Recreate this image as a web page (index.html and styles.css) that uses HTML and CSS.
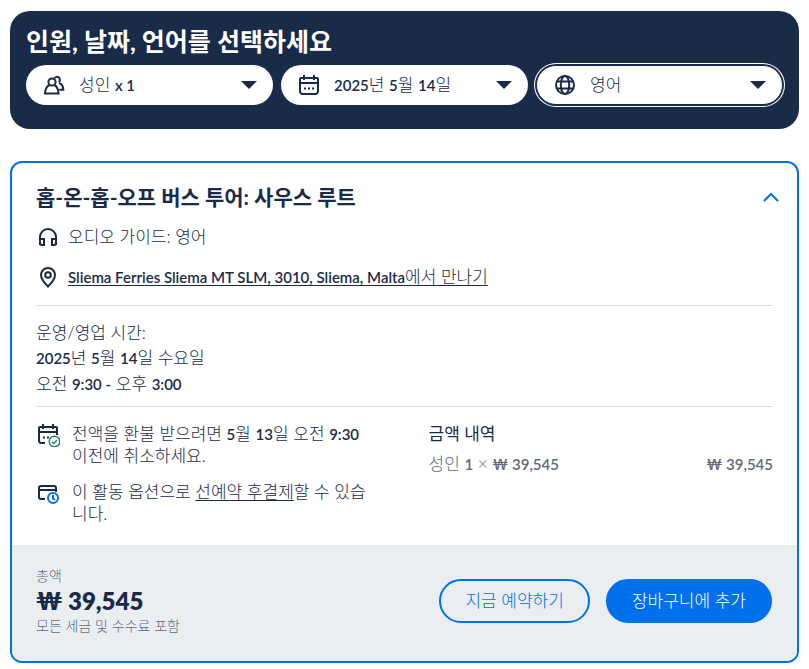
FILE: index.html
```html
<!DOCTYPE html>
<html lang="ko">
<head>
  <meta charset="UTF-8">
  <meta name="viewport" content="width=device-width, initial-scale=1">
  <title>인원, 날짜, 언어를 선택하세요</title>
  <link rel="stylesheet" href="styles.css">
</head>
<body>
  <section class="picker">
    <h2 class="picker-title">인원, 날짜, 언어를 선택하세요</h2>
    <div class="picker-fields">
      <button type="button" class="field" aria-haspopup="dialog">
        <svg class="icon" viewBox="0 0 24 24" aria-hidden="true">
          <circle cx="10" cy="9" r="3.6"/>
          <path d="M7.6 12C4.800 13.200 3.200 16 3 20.500h13.500c-.2-4.500-1.700-7.300-4.300-8.500"/>
          <path d="M12.300 5.400a3 3 0 1 1 4.600 3.700M17 10c2.700.9 4.200 3.300 4.300 6.700h-4"/>
        </svg>
        <span class="field-text">성인 <span class="latin">x 1</span></span>
        <span class="caret"></span>
      </button>
      <button type="button" class="field" aria-haspopup="dialog">
        <svg class="icon" viewBox="0 0 24 24" aria-hidden="true">
          <path d="M4 5h16a1 1 0 0 1 1 1v12.500a2.500 2.500 0 0 1-2.500 2.500h-13A2.500 2.500 0 0 1 3 18.500V6a1 1 0 0 1 1-1zM3 10h18M7 2v5M17 2v5"/>
          <path class="dots" d="M7 15.500h2M11 15.500h2M15 15.500h2"/>
        </svg>
        <span class="field-text"><span class="latin">2025</span>년 <span class="latin">5</span>월 <span class="latin">14</span>일</span>
        <span class="caret"></span>
      </button>
      <div class="field field-active">
        <svg class="icon" viewBox="0 0 24 24" aria-hidden="true">
          <circle cx="12" cy="12" r="9"/>
          <ellipse cx="12" cy="12" rx="4.200" ry="9"/>
          <path d="M4 8.500h16M4 15.500h16"/>
        </svg>
        <select class="field-text field-select" aria-label="언어">
          <option>영어</option>
        </select>
        <span class="caret"></span>
      </div>
    </div>
  </section>

  <section class="option">
    <div class="option-body">
      <div class="option-head">
        <h3 class="option-title">홉-온-홉-오프 버스 투어: 사우스 루트</h3>
        <button type="button" class="toggle" aria-label="접기">
          <svg class="icon" viewBox="0 0 24 24" aria-hidden="true"><path d="M5 16l7-7 7 7"/></svg>
        </button>
      </div>
      <div class="info">
        <svg class="icon" viewBox="0 0 24 24" aria-hidden="true">
          <path d="M4 20v-8a8 8 0 0 1 16 0v8"/>
          <path d="M4 14h4v6H6a2 2 0 0 1-2-2zM20 14h-4v6h2a2 2 0 0 0 2-2z"/>
        </svg>
        <span>오디오 가이드: 영어</span>
      </div>
      <div class="info">
        <svg class="icon" viewBox="0 0 24 24" aria-hidden="true">
          <path d="M12 21.500c-4-4-7-7.500-7-11.500a7 7 0 0 1 14 0c0 4-3 7.500-7 11.500z"/>
          <circle cx="12" cy="10" r="2.800"/>
        </svg>
        <a href="#"><span class="latin">Sliema Ferries Sliema MT SLM, 3010, Sliema, Malta</span>에서 만나기</a>
      </div>

      <div class="hours">
        <p>운영/영업 시간:</p>
        <p><span class="latin">2025</span>년 <span class="latin">5</span>월 <span class="latin">14</span>일 수요일</p>
        <p>오전 <span class="latin">9:30 -</span> 오후 <span class="latin">3:00</span></p>
      </div>

      <div class="details">
        <ul class="policies">
          <li>
            <svg class="icon" viewBox="0 0 24 24" aria-hidden="true">
              <path d="M9 20H5.500A2.500 2.500 0 0 1 3 17.500V5a1 1 0 0 1 1-1h16a1 1 0 0 1 1 1v7M3 9h18M7 1v5M17 1v5"/>
              <path class="dots" d="M7 14.500h2M11 14.500h2"/>
              <circle class="green" cx="18.500" cy="18.500" r="5.300"/>
              <path class="green" d="M16 18.700l1.800 1.800 3.200-3.600"/>
            </svg>
            <p>전액을 환불 받으려면 <span class="latin">5</span>월 <span class="latin">13</span>일 오전 <span class="latin">9:30</span> 이전에 취소하세요.</p>
          </li>
          <li>
            <svg class="icon" viewBox="0 0 24 24" aria-hidden="true">
              <path d="M9 18H5a2 2 0 0 1-2-2V7a2 2 0 0 1 2-2h13a2 2 0 0 1 2 2v4M3 9h17"/>
              <circle class="blue" cx="17" cy="17" r="5"/>
              <path class="blue" d="M17 14v3.500l2 1.500"/>
            </svg>
            <p class="break-any">이 활동 옵션으로 <a href="#">선예약 후결제</a>할 수 있습니다.</p>
          </li>
        </ul>
        <div class="price">
          <h4>금액 내역</h4>
          <div class="price-row">
            <span>성인 <span class="latin">1</span> × <span class="latin">₩ 39,545</span></span>
            <span class="latin">₩ 39,545</span>
          </div>
        </div>
      </div>
    </div>

    <div class="option-footer">
      <div class="total">
        <span class="total-label">총액</span>
        <strong class="total-price">₩ 39,545</strong>
        <span class="total-note">모든 세금 및 수수료 포함</span>
      </div>
      <div class="actions">
        <button type="button" class="btn btn-outline">지금 예약하기</button>
        <button type="button" class="btn btn-primary">장바구니에 추가</button>
      </div>
    </div>
  </section>
</body>
</html>
```

FILE: styles.css
```css
* {
  box-sizing: border-box;
}
body {
  margin: 11px 10px 10px;
  background: #fff;
  color: #1a2b49;
  font-family: Lato, "Noto Sans CJK KR", sans-serif;
  font-size: 17px;
  font-weight: 300;
  line-height: 22px;
}
h2, h3, h4, p, ul {
  margin: 0;
  padding: 0;
}
a {
  color: inherit;
  text-underline-offset: 2px;
}
button, select {
  font: inherit;
  color: inherit;
  cursor: pointer;
}
.latin {
  font-size: 15px;
  font-weight: 600;
}
.icon {
  flex: none;
  width: 24px;
  height: 24px;
  fill: none;
  stroke: #1a2b49;
  stroke-width: 2;
}
.icon .dots {
  stroke-width: 2;
}
.icon .green {
  stroke: #16875d;
  stroke-width: 1.400;
}
.icon .blue {
  stroke: #0071eb;
}

/* picker */
.picker {
  padding: 14px 16px 24px;
  background: #1a2b49;
  border-radius: 20px;
}
.picker-title {
  margin-bottom: 8px;
  color: #fff;
  font-size: 25px;
  font-weight: 700;
  line-height: 32px;
}
.picker-fields {
  display: grid;
  grid-template-columns: repeat(3, 1fr);
  gap: 8px;
}
.field {
  display: flex;
  align-items: center;
  gap: 13px;
  height: 40px;
  padding: 0 16px;
  background: #fff;
  border: 0;
  border-radius: 20px;
}
.field-active {
  border: 1px solid #1a2b49;
  box-shadow: 0 0 0 1px #1a2b49, 0 0 0 2px #fff;
}
.field-text {
  flex: 1;
  min-width: 0;
  text-align: left;
}
.field-select {
  appearance: none;
  padding: 0;
  background: none;
  border: 0;
  outline: 0;
}
.caret {
  border: 8px solid transparent;
  border-top-color: #1a2b49;
  border-bottom: 0;
}

/* option card */
.option {
  margin-top: 32px;
  border: 2px solid #0071eb;
  border-radius: 12px;
  overflow: hidden;
}
.option-body {
  padding: 20px 24px;
}
.option-head {
  display: flex;
  justify-content: space-between;
  align-items: center;
  margin-right: -10px;
}
.option-title {
  font-size: 21px;
  font-weight: 700;
  line-height: 28px;
}
.toggle {
  display: flex;
  padding: 0;
  background: none;
  border: 0;
}
.toggle .icon {
  stroke: #0071eb;
}
.info {
  display: flex;
  align-items: center;
  gap: 8px;
  margin-top: 12px;
  line-height: 28px;
}
.hours {
  margin-top: 14px;
  padding: 14px 0 9px;
  border-top: 1px solid #dcdfe4;
  border-bottom: 1px solid #dcdfe4;
  line-height: 25px;
}
.details {
  display: grid;
  grid-template-columns: 1fr 1fr;
  gap: 48px;
  padding-top: 16px;
}
.policies {
  list-style: none;
}
.policies li {
  display: flex;
  gap: 12px;
  margin-bottom: 14px;
}
.policies li:last-child {
  margin-bottom: 0;
}
.policies p {
  word-break: keep-all;
}
.policies .break-any {
  word-break: normal;
}
.price h4 {
  font-size: 17px;
  font-weight: 400;
}
.price-row {
  display: flex;
  justify-content: space-between;
  margin-top: 8px;
  color: #63687a;
}

/* footer */
.option-footer {
  display: flex;
  justify-content: space-between;
  align-items: center;
  padding: 20px 25px 24px 24px;
  background: #ebeef1;
}
.total {
  display: flex;
  flex-direction: column;
}
.total-label,
.total-note {
  color: #63687a;
  font-size: 14px;
}
.total-price {
  font-size: 24px;
  font-weight: 800;
  line-height: 28px;
}
.actions {
  display: flex;
  gap: 16px;
}
.btn {
  height: 44px;
  padding: 0 24px;
  border: 2px solid #0071eb;
  border-radius: 22px;
}
.btn-outline {
  background: none;
  color: #0071eb;
}
.btn-primary {
  background: #0071eb;
  color: #fff;
}
```
